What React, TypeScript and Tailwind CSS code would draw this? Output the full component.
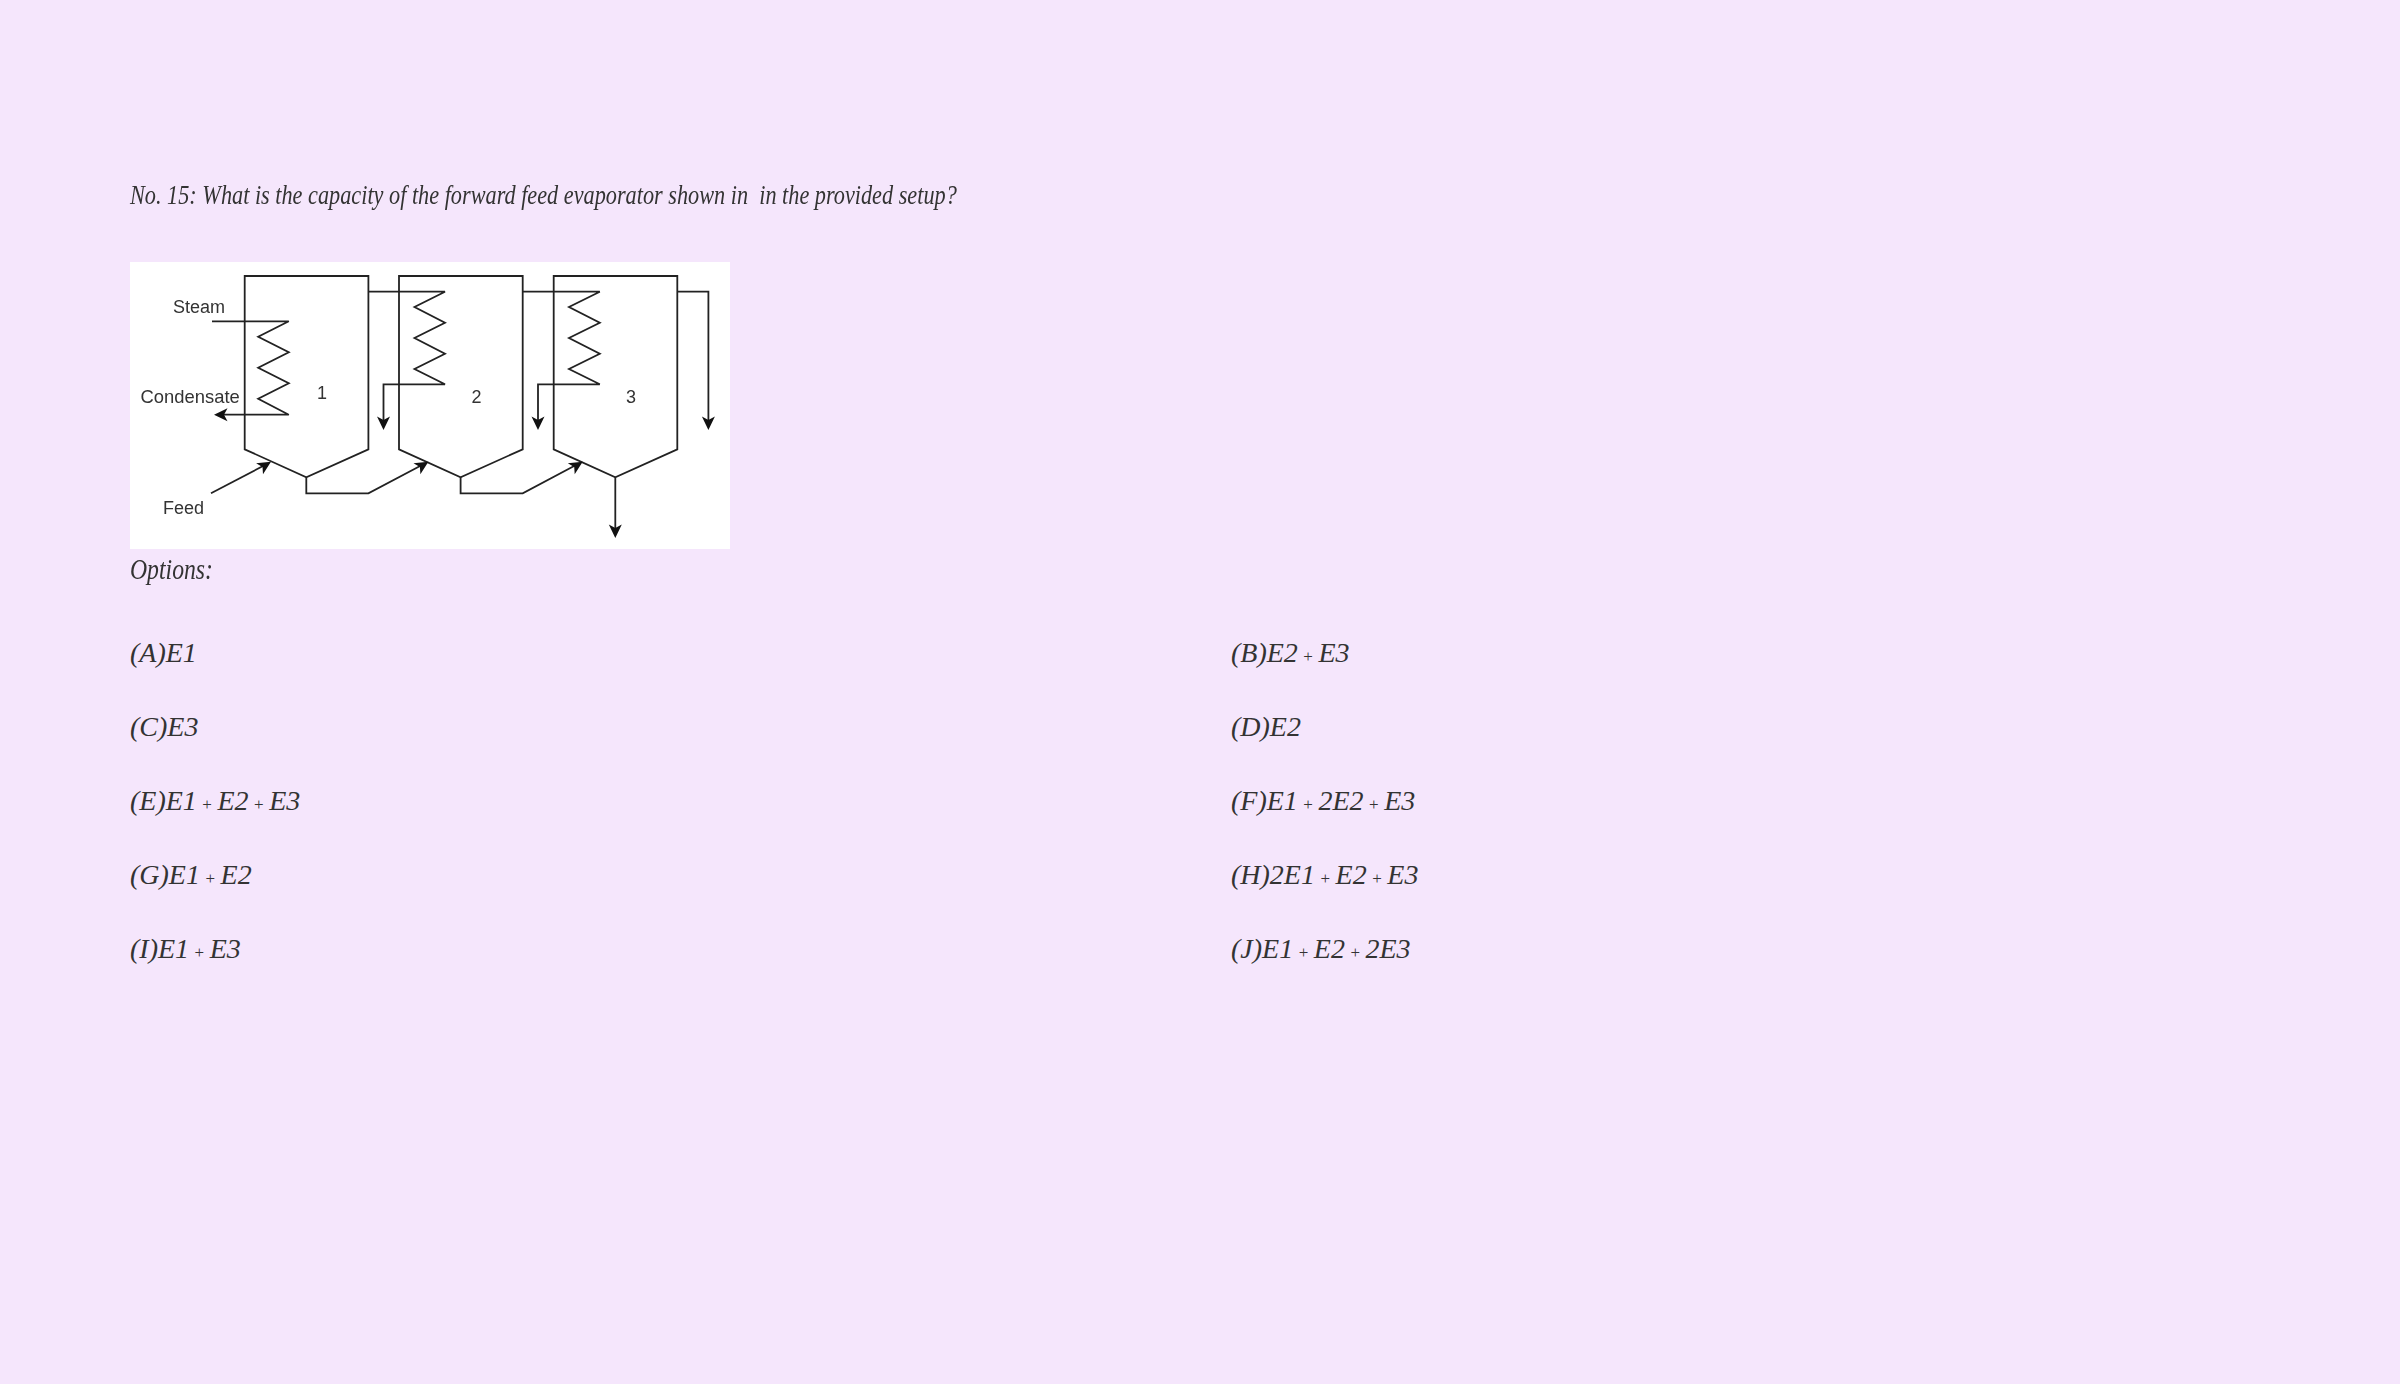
const options: string[] = [
  "(A)E1",
  "(B)E2 + E3",
  "(C)E3",
  "(D)E2",
  "(E)E1 + E2 + E3",
  "(F)E1 + 2E2 + E3",
  "(G)E1 + E2",
  "(H)2E1 + E2 + E3",
  "(I)E1 + E3",
  "(J)E1 + E2 + 2E3",
];

function Arrow({ x, y, dir }: { x: number; y: number; dir: "down" | "left" | "feed" }) {
  const transform =
    dir === "down" ? `translate(${x} ${y})` : dir === "left" ? `translate(${x} ${y}) rotate(90)` : `translate(${x} ${y}) rotate(-122)`;
  return <path d="M0 0 L-6.5 -13.5 L0 -10 L6.5 -13.5 Z" fill="#111" transform={transform} />;
}

function Diagram() {
  return (
    <svg width="600" height="287" viewBox="0 0 600 287" className="block bg-white not-italic blur-[0.4px]">
      <g fill="none" stroke="#222" strokeWidth="1.8">
        <path d="M114.7 14 H238.4 V187.3 L176.3 215.3 L114.7 187.3 Z" />
        <path d="M269 14 H392.7 V187.3 L330.6 215.3 L269 187.3 Z" />
        <path d="M423.7 14 H547.3 V187.3 L485.3 215.3 L423.7 187.3 Z" />
        <path d="M82 59.3 H158.8 L128.2 74.7 L158.8 90.3 L128.2 105.7 L158.8 121.3 L128.2 136.7 L158.8 152.7 H90" />
        <path d="M238.4 29.7 H315 L284.5 45 L315 60.7 L284.5 76 L315 91.7 L284.5 107 L315 122.3 H253.5 V160" />
        <path d="M392.7 29.7 H469.8 L439 45 L469.8 60.7 L439 76 L469.8 91.7 L439 107 L469.8 122.3 H408 V160" />
        <path d="M547.3 29.7 H578.4 V160" />
        <path d="M485.3 215.3 V268" />
        <path d="M81 231.3 L134 203.5" />
        <path d="M176.3 215.3 V231.3 H238.4 L292 203" />
        <path d="M330.6 215.3 V231.3 H392.7 L446 203" />
      </g>
      <Arrow x={253.5} y={168} dir="down" />
      <Arrow x={408} y={168} dir="down" />
      <Arrow x={578.4} y={168} dir="down" />
      <Arrow x={485.3} y={276} dir="down" />
      <Arrow x={84} y={152.7} dir="left" />
      <Arrow x={141} y={199.7} dir="feed" />
      <Arrow x={298.4} y={199.7} dir="feed" />
      <Arrow x={452.7} y={199.7} dir="feed" />
      <g fill="#333" fontFamily="'Liberation Sans', sans-serif" fontSize="18" fontStyle="normal">
        <text x="43" y="51">Steam</text>
        <text x="10.6" y="140.5" fontSize="18.4">Condensate</text>
        <text x="33" y="252">Feed</text>
        <text x="192" y="137" textAnchor="middle">1</text>
        <text x="346.5" y="141" textAnchor="middle">2</text>
        <text x="501" y="141" textAnchor="middle">3</text>
      </g>
    </svg>
  );
}

function Option({ text }: { text: string }) {
  const parts = text.split("+");
  return (
    <div className="h-[40px] overflow-visible whitespace-pre text-[28px] [word-spacing:-1.5px]">
      {parts.map((part, i) => (
        <span key={i}>
          {i > 0 && <span className="text-[17px] not-italic">+</span>}
          {part}
        </span>
      ))}
    </div>
  );
}

export default function App() {
  return (
    <div className="min-h-[1384px] bg-[#f5e6fc] pl-[130px] pt-[175px] font-['Liberation_Serif',serif] text-[28px] italic leading-[40px] text-[#333333]">
      <p className="mb-[47px] origin-left scale-x-[0.795] whitespace-pre">No. 15: What is the capacity of the forward feed evaporator shown in  in the provided setup?</p>
      <Diagram />
      <p className="origin-left scale-x-[0.79] text-[30px]">Options:</p>
      <div className="mt-[44px] grid grid-cols-[1101px_1fr] gap-y-[34px]">
        {options.map((o) => (
          <Option key={o} text={o} />
        ))}
      </div>
    </div>
  );
}
